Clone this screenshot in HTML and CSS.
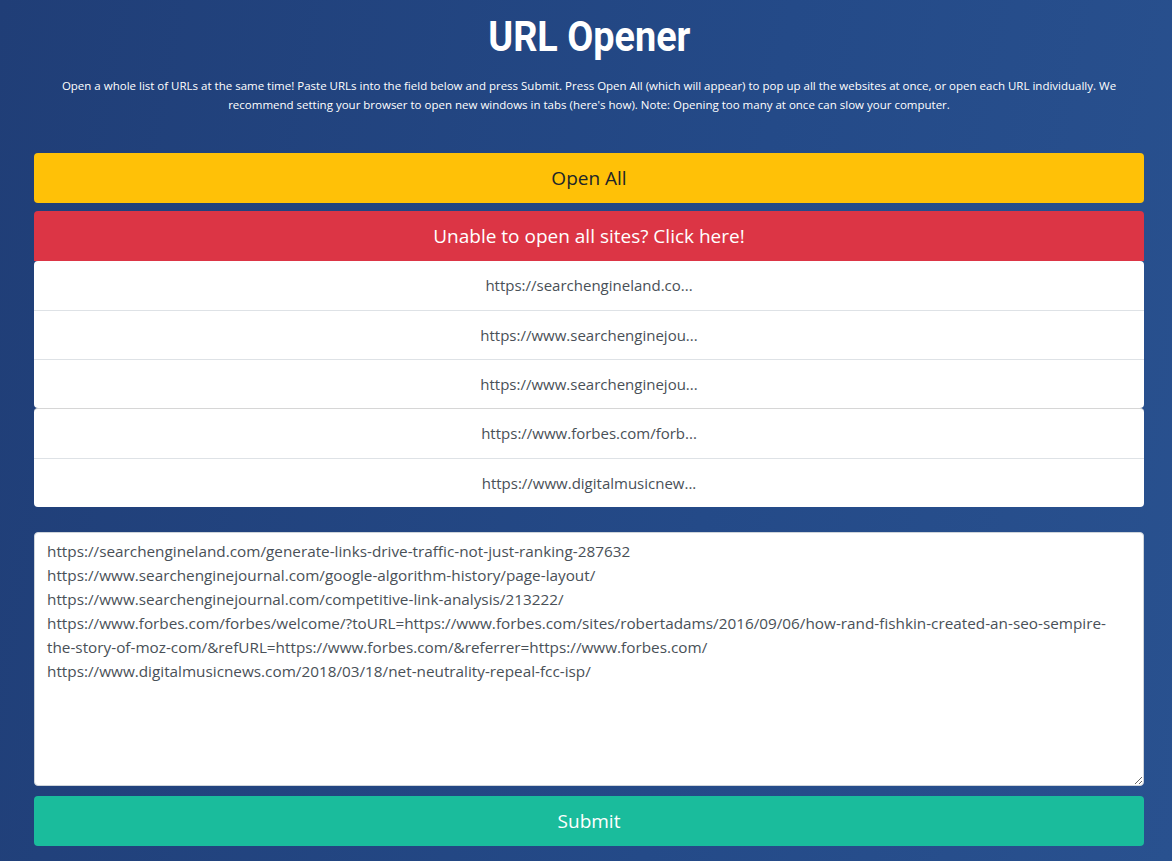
FILE: index.html
```html
<!DOCTYPE html>
<html lang="en">
<head>
<meta charset="utf-8">
<title>URL Opener</title>
<link rel="stylesheet" href="styles.css">
</head>
<body>
<main class="page">
  <header class="intro">
    <h1 class="title"><span class="title-text">URL Opener</span></h1>
    <p class="lead">Open a whole list of URLs at the same time! Paste URLs into the field below and press Submit. Press Open All (which will appear) to pop up all the websites at once, or open each URL individually. We recommend setting your browser to open new windows in tabs (here's how). Note: Opening too many at once can slow your computer.</p>
  </header>

  <section class="actions">
    <button class="btn btn-warning" type="button">Open All</button>
    <button class="btn btn-danger" type="button">Unable to open all sites? Click here!</button>
  </section>

  <ul class="list-group">
    <li class="list-item">https://searchengineland.co...</li>
    <li class="list-item">https://www.searchenginejou...</li>
    <li class="list-item">https://www.searchenginejou...</li>
  </ul>
  <ul class="list-group">
    <li class="list-item">https://www.forbes.com/forb...</li>
    <li class="list-item">https://www.digitalmusicnew...</li>
  </ul>

  <form class="url-form">
    <textarea class="url-input">https://searchengineland.com/generate-links-drive-traffic-not-just-ranking-287632
https://www.searchenginejournal.com/google-algorithm-history/page-layout/
https://www.searchenginejournal.com/competitive-link-analysis/213222/
https://www.forbes.com/forbes/welcome/?toURL=https://www.forbes.com/sites/robertadams/2016/09/06/how-rand-fishkin-created-an-seo-sempire-the-story-of-moz-com/&amp;refURL=https://www.forbes.com/&amp;referrer=https://www.forbes.com/
https://www.digitalmusicnews.com/2018/03/18/net-neutrality-repeal-fcc-isp/</textarea>
    <button class="btn btn-submit" type="button">Submit</button>
  </form>
</main>
</body>
</html>
```

FILE: styles.css
```css
* { box-sizing: border-box; }

html, body {
  margin: 0;
  padding: 0;
  height: 100%;
}

body {
  background: linear-gradient(100deg, #203e77 0%, #244a88 60%, #29518f 100%);
  font-family: "Open Sans", "Noto Sans", "DejaVu Sans", sans-serif;
  color: #fff;
  overflow: hidden;
}

.page {
  width: 1110px;
  margin: 0 0 0 34px;
  padding-top: 12px;
}

.intro {
  text-align: center;
  padding: 0 18px;
}

.title {
  margin: 0;
  font-family: Roboto, "Liberation Sans", sans-serif;
  font-weight: 700;
  font-size: 42px;
  line-height: 50px;
}

.title-text {
  display: inline-block;
  transform: scaleX(0.9);
  letter-spacing: 0;
}

.lead {
  margin: 14px 0 0;
  font-size: 11.5px;
  font-weight: 400;
  line-height: 19px;
  letter-spacing: 0;
}

.actions {
  margin-top: 39px;
  display: flex;
  flex-direction: column;
  gap: 8px;
}

.btn {
  display: block;
  width: 100%;
  height: 50px;
  border: 0;
  border-radius: 4px;
  font-family: "Open Sans", "Noto Sans", sans-serif;
  font-size: 19px;
  line-height: 50px;
  padding: 0;
  text-align: center;
  cursor: pointer;
}

.btn-warning { background: #ffc107; color: #212529; }
.btn-danger { background: #dc3545; color: #fff; border-radius: 4px 4px 0 0; }
.btn-submit { background: #1abc9c; color: #fff; }

.list-group {
  list-style: none;
  margin: 0;
  padding: 0;
  background: #fff;
  border-radius: 4px;
  overflow: hidden;
}

.list-group + .list-group {
  border-top: 1px solid #d6d6d6;
}

.list-item {
  height: 49px;
  line-height: 48px;
  text-align: center;
  font-size: 15px;
  color: #495057;
  border-top: 1px solid #dee2e6;
}

.list-item:first-child { border-top: 0; }

.url-form {
  margin-top: 25px;
  display: flex;
  flex-direction: column;
  gap: 10px;
}

.url-input {
  display: block;
  width: 100%;
  height: 254px;
  padding: 6px 12px;
  border: 1px solid #ced4da;
  border-radius: 4px;
  font-family: "Open Sans", "Noto Sans", sans-serif;
  font-size: 15.3px;
  line-height: 24px;
  color: #495057;
  background: #fff;
  resize: vertical;
}
```
